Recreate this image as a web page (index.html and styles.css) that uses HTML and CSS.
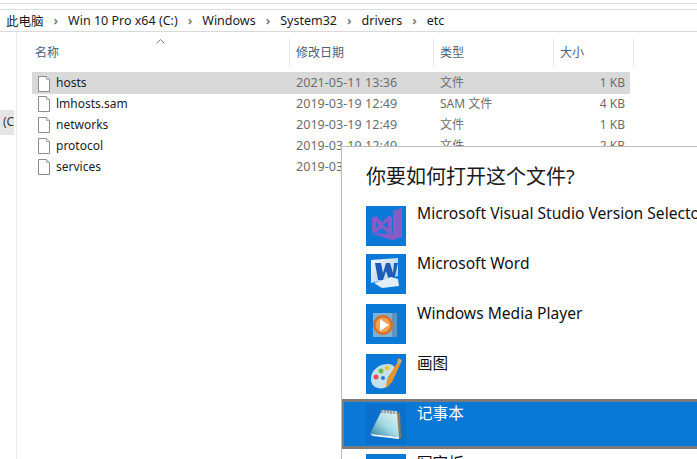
FILE: index.html
```html
<!DOCTYPE html>
<html>
<head>
    <title>etc</title>
    <link rel="stylesheet" href="styles.css">
</head>
<body>
    <div id="topStrip"></div>

    <div id="breadcrumb">
        <span>此电脑</span><span class="sep">›</span>
        <span>Win 10 Pro x64 (C:)</span><span class="sep">›</span>
        <span>Windows</span><span class="sep">›</span>
        <span>System32</span><span class="sep">›</span>
        <span>drivers</span><span class="sep">›</span>
        <span>etc</span>
    </div>

    <div id="explorer">
        <div id="sidebar"><div class="navItem">(C</div></div>
        <div id="filePane">
            <div class="sortArrow"><svg width="9" height="5" viewBox="0 0 9 5"><path d="M.5 4.5l4-4 4 4" fill="none" stroke="#7a7a7a"/></svg></div>
            <div class="headerRow">
                <div class="colName">名称</div>
                <div class="colDate">修改日期</div>
                <div class="colType">类型</div>
                <div class="colSize">大小</div>
            </div>
            <div class="fileRow selected">
                <div class="colName"><svg class="fileIcon" width="12" height="16" viewBox="0 0 12 16"><path d="M.5.5h8l3 3v12H.5z" fill="#fff" stroke="#8c8c8c"/><path d="M8.5.5v3h3" fill="#eee" stroke="#aaa"/></svg>hosts</div>
                <div class="colDate">2021-05-11 13:36</div>
                <div class="colType">文件</div>
                <div class="colSize">1 KB</div>
            </div>
            <div class="fileRow">
                <div class="colName"><svg class="fileIcon" width="12" height="16" viewBox="0 0 12 16"><path d="M.5.5h8l3 3v12H.5z" fill="#fff" stroke="#8c8c8c"/><path d="M8.5.5v3h3" fill="#eee" stroke="#aaa"/></svg>lmhosts.sam</div>
                <div class="colDate">2019-03-19 12:49</div>
                <div class="colType">SAM 文件</div>
                <div class="colSize">4 KB</div>
            </div>
            <div class="fileRow">
                <div class="colName"><svg class="fileIcon" width="12" height="16" viewBox="0 0 12 16"><path d="M.5.5h8l3 3v12H.5z" fill="#fff" stroke="#8c8c8c"/><path d="M8.5.5v3h3" fill="#eee" stroke="#aaa"/></svg>networks</div>
                <div class="colDate">2019-03-19 12:49</div>
                <div class="colType">文件</div>
                <div class="colSize">1 KB</div>
            </div>
            <div class="fileRow">
                <div class="colName"><svg class="fileIcon" width="12" height="16" viewBox="0 0 12 16"><path d="M.5.5h8l3 3v12H.5z" fill="#fff" stroke="#8c8c8c"/><path d="M8.5.5v3h3" fill="#eee" stroke="#aaa"/></svg>protocol</div>
                <div class="colDate">2019-03-19 12:49</div>
                <div class="colType">文件</div>
                <div class="colSize">2 KB</div>
            </div>
            <div class="fileRow">
                <div class="colName"><svg class="fileIcon" width="12" height="16" viewBox="0 0 12 16"><path d="M.5.5h8l3 3v12H.5z" fill="#fff" stroke="#8c8c8c"/><path d="M8.5.5v3h3" fill="#eee" stroke="#aaa"/></svg>services</div>
                <div class="colDate">2019-03-19 12:49</div>
                <div class="colType">文件</div>
                <div class="colSize">5 KB</div>
            </div>
        </div>
    </div>

    <div id="openDialog">
        <div class="dialogTitle">你要如何打开这个文件?</div>

        <div class="appRow">
            <svg class="appIcon" width="40" height="40" viewBox="0 0 40 40">
                <rect width="40" height="40" fill="#0a78d7"/>
                <path d="M27 5l9-3v29l-10 3-22-7 23 1z" fill="#8a5bc6"/>
                <path fill-rule="evenodd" d="M6 12l4-2 6 6 7-6 3 1v16l-3 1-7-6-6 5-4-2zM10 16v6l3-3zM22 15l-5 4 5 4z" fill="#8a5bc6"/>
            </svg>
            <div class="appName">Microsoft Visual Studio Version Selector</div>
        </div>

        <div class="appRow">
            <svg class="appIcon" width="40" height="40" viewBox="0 0 40 40">
                <defs>
                    <linearGradient id="wordDoc" x1="0" y1="0" x2="1" y2="1">
                        <stop offset="0" stop-color="#f2f7fc"/>
                        <stop offset="1" stop-color="#a9c9ea"/>
                    </linearGradient>
                </defs>
                <rect width="40" height="40" fill="#0a78d7"/>
                <path d="M5 6l27-2v18l-27 7z" fill="url(#wordDoc)"/>
                <path d="M9 9h6l2 10 3-10h4l3 10 1-10h4l-4 17h-5l-3-9-3 9h-5z" fill="#1d5cb4"/>
                <path d="M8 29l17-6 7 2 1 7-17 2z" fill="#e4eef8"/>
            </svg>
            <div class="appName">Microsoft Word</div>
        </div>

        <div class="appRow">
            <svg class="appIcon" width="40" height="40" viewBox="0 0 40 40">
                <rect width="40" height="40" fill="#0a78d7"/>
                <path d="M7 9h24v24H7z" fill="#7fb0d4"/>
                <path d="M26 9h5v24h-5z" fill="#5d95bf"/>
                <circle cx="17" cy="21" r="10" fill="#d96f26"/>
                <circle cx="17" cy="21" r="7.5" fill="#f0a050"/>
                <path d="M14 15l9 6-9 6z" fill="#fff"/>
            </svg>
            <div class="appName">Windows Media Player</div>
        </div>

        <div class="appRow">
            <svg class="appIcon" width="40" height="40" viewBox="0 0 40 40">
                <rect width="40" height="40" fill="#0a78d7"/>
                <path d="M5 25c0-9 8-15 17-15 5 0 8 3 7 7-1 4-7 3-7 7 0 3 3 4 1 7-3 3-7 4-11 3-5-1-7-5-7-9z" fill="#c5e1ee"/>
                <circle cx="10" cy="23" r="2.5" fill="#d9534f"/>
                <circle cx="15" cy="17" r="2.5" fill="#6dbb4f"/>
                <circle cx="21" cy="14" r="2.5" fill="#eec63c"/>
                <circle cx="17" cy="24" r="2" fill="#3478c8"/>
                <path d="M31 9l3 2-8 17-6 6 1-9z" fill="#e8942e"/>
                <path d="M32 4l4 2-2 5-3-2z" fill="#c9a876"/>
            </svg>
            <div class="appName">画图</div>
        </div>

        <div class="appRow active">
            <svg class="appIcon" width="40" height="40" viewBox="0 0 40 40">
                <defs>
                    <linearGradient id="padFace" x1="0" y1="1" x2="1" y2="0">
                        <stop offset="0" stop-color="#2f7f9e"/>
                        <stop offset=".5" stop-color="#a4dbe4"/>
                        <stop offset="1" stop-color="#e4f4f6"/>
                    </linearGradient>
                </defs>
                <rect width="40" height="40" fill="#0a70cc"/>
                <path d="M30 8l4 1 1 25-3 0z" fill="#8d7a5c"/>
                <path d="M15 8l16 1 2 24-29-3z" fill="url(#padFace)"/>
                <path d="M15 6l16 1 0 3-16-1z" fill="#c9d0d4"/>
                <path d="M16 6v3M19 6v3M22 6v3M25 7v3M28 7v3" stroke="#6f7a80"/>
                <path d="M4 30l29 3v2l-26-3z" fill="#f4f7f8"/>
            </svg>
            <div class="appName">记事本</div>
        </div>

        <div class="appRow">
            <svg class="appIcon" width="40" height="40" viewBox="0 0 40 40">
                <rect width="40" height="40" fill="#0a78d7"/>
            </svg>
            <div class="appName">写字板</div>
        </div>
    </div>
</body>
</html>
```

FILE: styles.css
```css
html, body {
    margin: 0;
    padding: 0;
    height: 100%;
    overflow: hidden;
    background-color: #fff;
    font-family: "Noto Sans", "Noto Sans CJK SC", sans-serif;
    font-size: 12px;
    position: relative;
}

#topStrip {
    height: 3px;
    border-bottom: 1px solid #dcdcdc;
    margin-bottom: 5px;
}

#breadcrumb {
    height: 21px;
    border-top: 1px solid #dcdcdc;
    border-bottom: 1px solid #d9d9d9;
    display: flex;
    align-items: center;
    padding-left: 6px;
    color: #1a1a1a;
    font-size: 12.5px;
}

.sep {
    color: #7d7d7d;
    font-weight: bold;
    margin: 0 10px;
}

#explorer {
    display: flex;
    height: 427px;
}

#sidebar {
    width: 16px;
    border-right: 1px solid #ececec;
    padding-top: 78px;
}

.navItem {
    width: 14px;
    height: 25px;
    background-color: #e5e5e5;
    color: #333;
    padding-left: 3px;
    box-sizing: border-box;
    line-height: 23px;
    overflow: hidden;
}

#filePane {
    flex-grow: 1;
    padding-left: 15px;
    position: relative;
}

.sortArrow {
    position: absolute;
    left: 139px;
    top: 7px;
    line-height: 0;
}

.headerRow, .fileRow {
    display: flex;
}

.headerRow {
    width: 602px;
    height: 27px;
    margin-top: 7px;
    margin-bottom: 6px;
    color: #4c607a;
    line-height: 27px;
}

.headerRow > div {
    border-right: 1px solid #e5e5e5;
}

.fileRow {
    width: 598px;
    height: 21px;
    line-height: 19px;
    color: #6d6d6d;
}

.fileRow .colName {
    padding-bottom: 2px;
}

.fileRow.selected {
    height: 22px;
    line-height: 22px;
    background-color: #d9d9d9;
}

.fileRow.selected .colName {
    padding-bottom: 0;
}

.colName {
    width: 258px;
    display: flex;
    align-items: center;
    box-sizing: border-box;
    color: #1c1c1c;
}

.headerRow .colName {
    color: #4c607a;
    padding-left: 3px;
}

.colDate {
    width: 144px;
    box-sizing: border-box;
    padding-left: 6px;
    font-size: 12.6px;
}

.headerRow .colDate {
    font-size: 12px;
}

.colType {
    width: 120px;
    box-sizing: border-box;
    padding-left: 6px;
}

.colSize {
    width: 80px;
    box-sizing: border-box;
    padding-left: 6px;
}

.fileRow .colSize {
    width: 76px;
    text-align: right;
    padding: 0 5px 0 0;
}

.fileIcon {
    margin: 1px 6px 0 6px;
    flex-shrink: 0;
}

#openDialog {
    position: absolute;
    left: 341px;
    top: 146px;
    width: 356px;
    height: 313px;
    box-sizing: border-box;
    background-color: #fff;
    border-top: 1px solid #bdbdbd;
    border-left: 1px solid #bdbdbd;
    overflow: hidden;
}

.dialogTitle {
    font-size: 20px;
    color: #1a1a1a;
    padding-left: 24px;
    height: 54px;
    line-height: 59px;
}

.appRow {
    display: flex;
    height: 50px;
    padding-left: 24px;
    padding-top: 5px;
    font-size: 15.6px;
    color: #111;
    box-sizing: border-box;
    white-space: nowrap;
    align-items: flex-start;
}

.dialogTitle + .appRow {
    height: 48px;
}

.dialogTitle + .appRow .appName {
    margin-top: -3px;
}

.appIcon {
    flex-shrink: 0;
    margin-right: 11px;
}

.appName {
    line-height: 20px;
    margin-top: -1px;
}

.appRow.active {
    background-color: #0a78d7;
    border-top: 3px solid #7a7a7a;
    border-bottom: 3px solid #7a7a7a;
    border-left: 2px solid #7a7a7a;
    color: #fff;
    padding-top: 2px;
    padding-left: 22px;
}
```
